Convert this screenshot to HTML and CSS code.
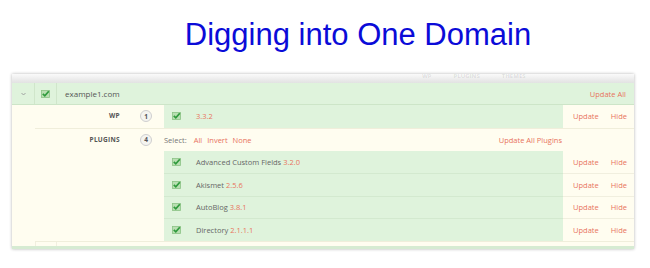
FILE: index.html
```html
<!DOCTYPE html>
<html lang="en">
<head>
	<meta charset="UTF-8" />
	<title>Digging into One Domain</title>
	<link rel="stylesheet" href="styles.css">
</head>
<body>
<h1 class="title">Digging into One Domain</h1>

<div class="panel">
	<div class="panel-head">
		<span class="head-col">WP</span>
		<span class="head-col">PLUGINS</span>
		<span class="head-col">THEMES</span>
	</div>

	<div class="domain-row">
		<div class="cell-toggle">
			<svg width="5" height="4" viewBox="0 0 5 4"><path d="M0.5 1 L2.5 3 L4.5 1" fill="none" stroke="#9a9a9a" stroke-width="0.9"/></svg>
		</div>
		<div class="cell-check">
			<svg class="check" width="9" height="8" viewBox="0 0 9 8"><rect x="0.5" y="0.5" width="8" height="7" fill="#b9dfb2" stroke="#8cc386" stroke-width="0.8"/><path d="M1.8 3.8 L3.8 5.8 L7.8 1.2" fill="none" stroke="#2f9a3c" stroke-width="1.7"/></svg>
		</div>
		<div class="domain-name">example1.com</div>
		<a class="link domain-update">Update All</a>
	</div>

	<div class="section">
		<div class="section-label">WP</div>
		<div class="section-count"><span class="badge">1</span></div>
		<div class="section-body">
			<div class="item">
				<div class="item-main">
					<svg class="check" width="9" height="8" viewBox="0 0 9 8"><rect x="0.5" y="0.5" width="8" height="7" fill="#b9dfb2" stroke="#8cc386" stroke-width="0.8"/><path d="M1.8 3.8 L3.8 5.8 L7.8 1.2" fill="none" stroke="#2f9a3c" stroke-width="1.7"/></svg>
					<span class="item-name"><span class="version">3.3.2</span></span>
				</div>
				<div class="item-actions">
					<a class="link">Update</a>
					<a class="link">Hide</a>
				</div>
			</div>
		</div>
	</div>

	<div class="section">
		<div class="section-label">PLUGINS</div>
		<div class="section-count"><span class="badge">4</span></div>
		<div class="section-body">
			<div class="select-bar">
				<span class="select-label">Select:</span>
				<a class="link">All</a>
				<a class="link">Invert</a>
				<a class="link">None</a>
				<a class="link select-update">Update All Plugins</a>
			</div>
			<div class="item">
				<div class="item-main">
					<svg class="check" width="9" height="8" viewBox="0 0 9 8"><rect x="0.5" y="0.5" width="8" height="7" fill="#b9dfb2" stroke="#8cc386" stroke-width="0.8"/><path d="M1.8 3.8 L3.8 5.8 L7.8 1.2" fill="none" stroke="#2f9a3c" stroke-width="1.7"/></svg>
					<span class="item-name">Advanced Custom Fields <span class="version">3.2.0</span></span>
				</div>
				<div class="item-actions">
					<a class="link">Update</a>
					<a class="link">Hide</a>
				</div>
			</div>
			<div class="item">
				<div class="item-main">
					<svg class="check" width="9" height="8" viewBox="0 0 9 8"><rect x="0.5" y="0.5" width="8" height="7" fill="#b9dfb2" stroke="#8cc386" stroke-width="0.8"/><path d="M1.8 3.8 L3.8 5.8 L7.8 1.2" fill="none" stroke="#2f9a3c" stroke-width="1.7"/></svg>
					<span class="item-name">Akismet <span class="version">2.5.6</span></span>
				</div>
				<div class="item-actions">
					<a class="link">Update</a>
					<a class="link">Hide</a>
				</div>
			</div>
			<div class="item">
				<div class="item-main">
					<svg class="check" width="9" height="8" viewBox="0 0 9 8"><rect x="0.5" y="0.5" width="8" height="7" fill="#b9dfb2" stroke="#8cc386" stroke-width="0.8"/><path d="M1.8 3.8 L3.8 5.8 L7.8 1.2" fill="none" stroke="#2f9a3c" stroke-width="1.7"/></svg>
					<span class="item-name">AutoBlog <span class="version">3.8.1</span></span>
				</div>
				<div class="item-actions">
					<a class="link">Update</a>
					<a class="link">Hide</a>
				</div>
			</div>
			<div class="item">
				<div class="item-main">
					<svg class="check" width="9" height="8" viewBox="0 0 9 8"><rect x="0.5" y="0.5" width="8" height="7" fill="#b9dfb2" stroke="#8cc386" stroke-width="0.8"/><path d="M1.8 3.8 L3.8 5.8 L7.8 1.2" fill="none" stroke="#2f9a3c" stroke-width="1.7"/></svg>
					<span class="item-name">Directory <span class="version">2.1.1.1</span></span>
				</div>
				<div class="item-actions">
					<a class="link">Update</a>
					<a class="link">Hide</a>
				</div>
			</div>
		</div>
	</div>

	<div class="panel-foot">
		<div class="foot-toggle"></div>
		<div class="foot-check"></div>
	</div>
</div>
</body>
</html>
```

FILE: styles.css
```css
* {
	padding: 0;
	margin: 0;
	box-sizing: border-box;
}
body, html {
	width: 100%;
	height: 100%;
	background: #fff;
}
body {
	font-family: "Open Sans", "DejaVu Sans", sans-serif;
	font-size: 7.5px;
	color: #666;
}
.title {
	font-family: "Liberation Sans", Arial, sans-serif;
	font-weight: normal;
	font-size: 31px;
	line-height: 30px;
	color: #0b0bd8;
	text-align: center;
	padding: 20px 0 0 66px;
	height: 74px;
}
.panel {
	margin: 0 16px 0 12px;
	background: #fffdf0;
	box-shadow: 0 0 3px rgba(0, 0, 0, 0.3);
}
.panel-head {
	height: 9px;
	display: flex;
	padding-left: 410px;
	background: linear-gradient(#fafafa, #e2e2e2);
	font-size: 6px;
	font-weight: bold;
	line-height: 4px;
	color: rgba(0, 0, 0, 0.1);
	gap: 22px;
}
.domain-row {
	display: flex;
	align-items: center;
	height: 22px;
	background: #dff3dc;
	border-bottom: 1px solid #cde5c8;
}
.cell-toggle,
.cell-check {
	display: flex;
	align-items: center;
	justify-content: center;
	height: 100%;
	border-right: 1px solid #d0e6cb;
}
.cell-toggle {
	width: 23px;
}
.cell-check {
	width: 22px;
}
.check {
	display: block;
	flex: none;
}
.domain-name {
	flex: 1;
	padding-left: 8px;
	font-size: 8px;
	color: #555;
}
.domain-update {
	padding-right: 8px;
}
.link {
	color: #e8735d;
}
.section {
	display: flex;
	margin-left: 23px;
	border-bottom: 1px solid #f0eedb;
}
.section-label {
	width: 85px;
	height: 22px;
	line-height: 22px;
	text-align: right;
	font-size: 6.5px;
	font-weight: bold;
	letter-spacing: 0.3px;
	color: #555;
}
.section-count {
	width: 44px;
	height: 22px;
	display: flex;
	align-items: center;
	padding-left: 20px;
}
.badge {
	width: 12px;
	height: 12px;
	border-radius: 50%;
	border: 1px solid #cfcfcf;
	background: #f4f4f0;
	font-size: 6.5px;
	font-weight: bold;
	color: #555;
	display: flex;
	align-items: center;
	justify-content: center;
}
.section-body {
	flex: 1;
}
.item {
	display: flex;
	height: 22.5px;
}
.item + .item .item-main {
	border-top: 1px solid #d3e9cf;
}
.item + .item .item-actions {
	border-top: 1px solid #f1efdf;
}
.item-main {
	flex: 1;
	display: flex;
	align-items: center;
	background: #dff3dc;
	padding-left: 8px;
}
.item-name {
	margin-left: 15px;
	color: #666;
}
.version {
	color: #e8735d;
}
.item-actions {
	width: 71px;
	display: flex;
	align-items: center;
	justify-content: space-between;
	padding: 0 7px 0 10px;
}
.select-bar {
	display: flex;
	align-items: center;
	height: 22px;
	gap: 5px;
	padding-right: 72px;
}
.select-label {
	color: #777;
	margin-right: 2px;
}
.select-update {
	margin-left: auto;
}
.panel-foot {
	display: flex;
	height: 7px;
	border-bottom: 3px solid #d6ebd2;
}
.foot-toggle {
	width: 23px;
}
.foot-check {
	width: 22px;
	border-left: 1px solid #f1efdf;
	border-right: 1px solid #f1efdf;
}
```
